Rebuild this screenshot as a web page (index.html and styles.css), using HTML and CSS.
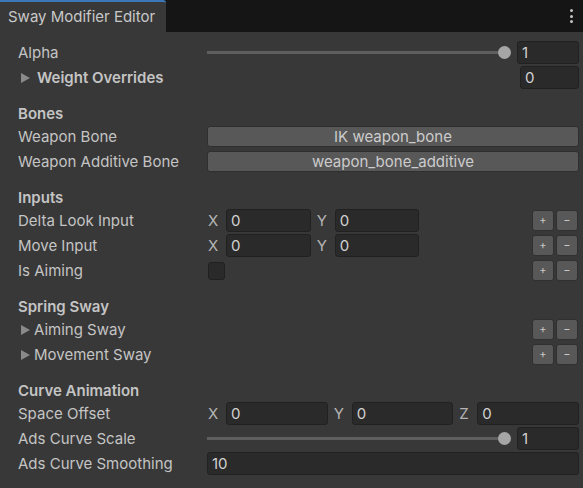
FILE: index.html
```html
<!DOCTYPE html>
<html>
<head>
<meta charset="utf-8">
<title>Sway Modifier Editor</title>
<link rel="stylesheet" href="styles.css">
</head>
<body>
<div class="window">
  <div class="tabbar">
    <div class="tab">Sway Modifier Editor</div>
    <div class="kebab"><span></span><span></span><span></span></div>
  </div>

  <div class="inspector">
    <div class="row">
      <div class="label">Alpha</div>
      <div class="control">
        <div class="slider"><div class="track"></div><div class="thumb"></div></div>
        <div class="field num">1</div>
      </div>
    </div>
    <div class="row">
      <div class="label foldout wide-gap bold"><span class="arrow"></span>Weight Overrides</div>
      <div class="control">
        <div class="field num size">0</div>
      </div>
    </div>

    <div class="header">Bones</div>
    <div class="row">
      <div class="label">Weapon Bone</div>
      <div class="control"><div class="button">IK weapon_bone</div></div>
    </div>
    <div class="row">
      <div class="label">Weapon Additive Bone</div>
      <div class="control"><div class="button">weapon_bone_additive</div></div>
    </div>

    <div class="header">Inputs</div>
    <div class="row first">
      <div class="label">Delta Look Input</div>
      <div class="control vector">
        <div class="comp"><span class="axis">X</span><div class="field">0</div></div>
        <div class="comp"><span class="axis">Y</span><div class="field">0</div></div>
      </div>
      <div class="pm"><div class="pm-btn">+</div><div class="pm-btn">−</div></div>
    </div>
    <div class="row">
      <div class="label">Move Input</div>
      <div class="control vector">
        <div class="comp"><span class="axis">X</span><div class="field">0</div></div>
        <div class="comp"><span class="axis">Y</span><div class="field">0</div></div>
      </div>
      <div class="pm"><div class="pm-btn">+</div><div class="pm-btn">−</div></div>
    </div>
    <div class="row">
      <div class="label">Is Aiming</div>
      <div class="control"><div class="checkbox"></div></div>
      <div class="pm"><div class="pm-btn">+</div><div class="pm-btn">−</div></div>
    </div>

    <div class="header">Spring Sway</div>
    <div class="row">
      <div class="label foldout"><span class="arrow"></span>Aiming Sway</div>
      <div class="control"></div>
      <div class="pm"><div class="pm-btn">+</div><div class="pm-btn">−</div></div>
    </div>
    <div class="row">
      <div class="label foldout"><span class="arrow"></span>Movement Sway</div>
      <div class="control"></div>
      <div class="pm"><div class="pm-btn">+</div><div class="pm-btn">−</div></div>
    </div>

    <div class="header">Curve Animation</div>
    <div class="row">
      <div class="label">Space Offset</div>
      <div class="control vector">
        <div class="comp"><span class="axis">X</span><div class="field">0</div></div>
        <div class="comp"><span class="axis">Y</span><div class="field">0</div></div>
        <div class="comp"><span class="axis">Z</span><div class="field">0</div></div>
      </div>
    </div>
    <div class="row">
      <div class="label">Ads Curve Scale</div>
      <div class="control">
        <div class="slider"><div class="track"></div><div class="thumb"></div></div>
        <div class="field num">1</div>
      </div>
    </div>
    <div class="row">
      <div class="label">Ads Curve Smoothing</div>
      <div class="control"><div class="field grow">10</div></div>
    </div>
  </div>
</div>
</body>
</html>
```

FILE: styles.css
```css
* {
  box-sizing: border-box;
}

html, body {
  margin: 0;
  padding: 0;
  background: #383838;
}

.window {
  width: 583px;
  height: 488px;
  overflow: hidden;
  background: #383838;
  font-family: Inter, "Noto Sans", sans-serif;
  font-size: 15px;
  color: #c4c4c4;
}

/* ---- tab strip ---- */
.tabbar {
  height: 32px;
  background: #151515;
  display: flex;
  align-items: stretch;
  justify-content: space-between;
}

.tab {
  width: 166px;
  background: #383838;
  border-top: 2px solid #3b78b8;
  border-top-right-radius: 3px;
  padding-left: 8px;
  line-height: 29px;
  color: #c8c8c8;
  white-space: nowrap;
}

.kebab {
  width: 24px;
  display: flex;
  flex-direction: column;
  align-items: center;
  gap: 2.5px;
  padding-top: 9px;
}

.kebab span {
  width: 3px;
  height: 3px;
  border-radius: 50%;
  background: #c4c4c4;
}

/* ---- inspector body ---- */
.inspector {
  padding: 8px 4px 0 18px;
}

.row {
  height: 25px;
  display: flex;
  align-items: center;
}

.label {
  width: 189px;
  flex: none;
  white-space: nowrap;
  display: flex;
  align-items: center;
}

.bold {
  font-weight: 600;
}

.header {
  margin-top: 13px;
  height: 21px;
  line-height: 21px;
  font-weight: 600;
}

.foldout .arrow {
  width: 0;
  height: 0;
  margin-left: 3px;
  margin-right: 4px;
  border-left: 9px solid #8a8a8a;
  border-top: 5px solid transparent;
  border-bottom: 5px solid transparent;
}

.foldout.wide-gap .arrow {
  margin-right: 7px;
}

.control {
  flex: 1;
  min-width: 0;
  display: flex;
  align-items: center;
  gap: 6px;
}

/* ---- fields ---- */
.field {
  height: 23px;
  background: #2a2a2a;
  border: 1px solid #212121;
  border-radius: 3px;
  padding: 0 4px;
  line-height: 21px;
  color: #d2d2d2;
  white-space: nowrap;
}

.field.num {
  width: 62px;
  flex: none;
}

.field.size {
  width: 59px;
  margin-left: auto;
}

.field.grow {
  flex: 1;
}

/* ---- slider ---- */
.slider {
  flex: 1;
  position: relative;
  height: 14px;
}

.slider .track {
  position: absolute;
  left: 0;
  right: 7px;
  top: 5px;
  height: 3px;
  background: #5e5e5e;
}

.slider .thumb {
  position: absolute;
  right: 0;
  top: 0;
  width: 13px;
  height: 13px;
  border-radius: 50%;
  background: #a6a6a6;
}

/* ---- object picker style buttons ---- */
.button {
  flex: 1;
  height: 21px;
  background: #585858;
  border: 1px solid #2f2f2f;
  border-radius: 3px;
  text-align: center;
  line-height: 19px;
  color: #cccccc;
  white-space: nowrap;
}

/* ---- vector fields ---- */
.vector {
  display: grid;
  grid-template-columns: repeat(3, 1fr);
  gap: 5px;
}

.comp {
  display: flex;
  align-items: center;
  min-width: 0;
}

.comp .axis {
  width: 19px;
  flex: none;
  padding-left: 1px;
  color: #b4b4b4;
}

.comp .field {
  flex: 1;
  min-width: 0;
}

/* ---- checkbox ---- */
.checkbox {
  width: 17px;
  height: 18px;
  margin-left: 1px;
  background: #2a2a2a;
  border: 1px solid #202020;
  border-radius: 3px;
}

/* ---- add / remove buttons ---- */
.pm {
  display: flex;
  gap: 2px;
  margin-left: 4px;
  margin-right: 1px;
}

.pm-btn {
  width: 22px;
  height: 21px;
  background: #585858;
  border: 1px solid #303030;
  border-radius: 3px;
  color: #c8c8c8;
  font-size: 11px;
  line-height: 19px;
  text-align: center;
}
```
